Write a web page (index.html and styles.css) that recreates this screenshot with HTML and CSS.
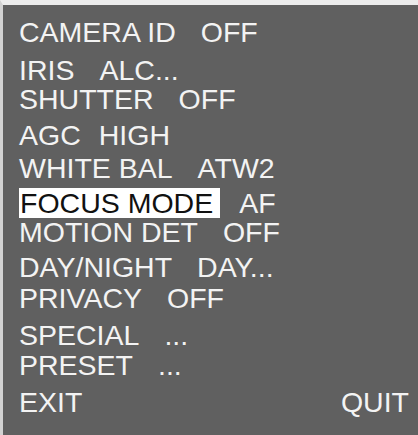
FILE: index.html
```html
<!DOCTYPE html>
<html lang="en">
<head>
  <meta charset="UTF-8">
  <title>Camera Setup</title>
  <link rel="stylesheet" href="styles.css">
</head>
<body>
<div class="osd">
  <div class="osd-row"><span class="label">CAMERA ID</span><span class="value">OFF</span></div>
  <div class="osd-row"><span class="label">IRIS</span><span class="value">ALC...</span></div>
  <div class="osd-row"><span class="label">SHUTTER</span><span class="value">OFF</span></div>
  <div class="osd-row short"><span class="label">AGC</span><span class="value">HIGH</span></div>
  <div class="osd-row"><span class="label">WHITE BAL</span><span class="value">ATW2</span></div>
  <div class="osd-row selected"><span class="label">FOCUS MODE</span><span class="value">AF</span></div>
  <div class="osd-row"><span class="label">MOTION DET</span><span class="value">OFF</span></div>
  <div class="osd-row"><span class="label">DAY/NIGHT</span><span class="value">DAY...</span></div>
  <div class="osd-row"><span class="label">PRIVACY</span><span class="value">OFF</span></div>
  <div class="osd-row"><span class="label">SPECIAL</span><span class="value">...</span></div>
  <div class="osd-row"><span class="label">PRESET</span><span class="value">...</span></div>
  <div class="osd-row osd-footer"><span class="label">EXIT</span><span class="value">QUIT</span></div>
</div>
</body>
</html>
```

FILE: styles.css
```css
html, body {
  margin: 0;
  padding: 0;
}

body {
  background: #606060;
}

.osd {
  box-sizing: border-box;
  width: 418px;
  height: 435px;
  background: #606060;
  border-top: 5px solid #ececec;
  border-left: 3px solid #d2d2d2;
  padding: 13px 9px 0 16px;
  color: #f3f3f3;
  font-family: "Liberation Sans", Arial, sans-serif;
  font-size: 28.5px;
  line-height: 28px;
  display: grid;
  /* the menu lines are not evenly spaced on the monitor */
  grid-template-rows: 38px 29px 36px 33px 34px 30px 35px 31px 37px 30px 37px auto;
}

.osd-row {
  display: flex;
  align-items: baseline;
  gap: 25px;
  white-space: nowrap;
}

.osd-row.short {
  gap: 18px;
}

.osd-row.selected {
  gap: 19px;
}

.osd-row.selected .label {
  display: inline-block;
  background: #ffffff;
  color: #111111;
  line-height: 30px;
  padding: 0 7px 0 1px;
}

.osd-footer {
  justify-content: space-between;
}
```
